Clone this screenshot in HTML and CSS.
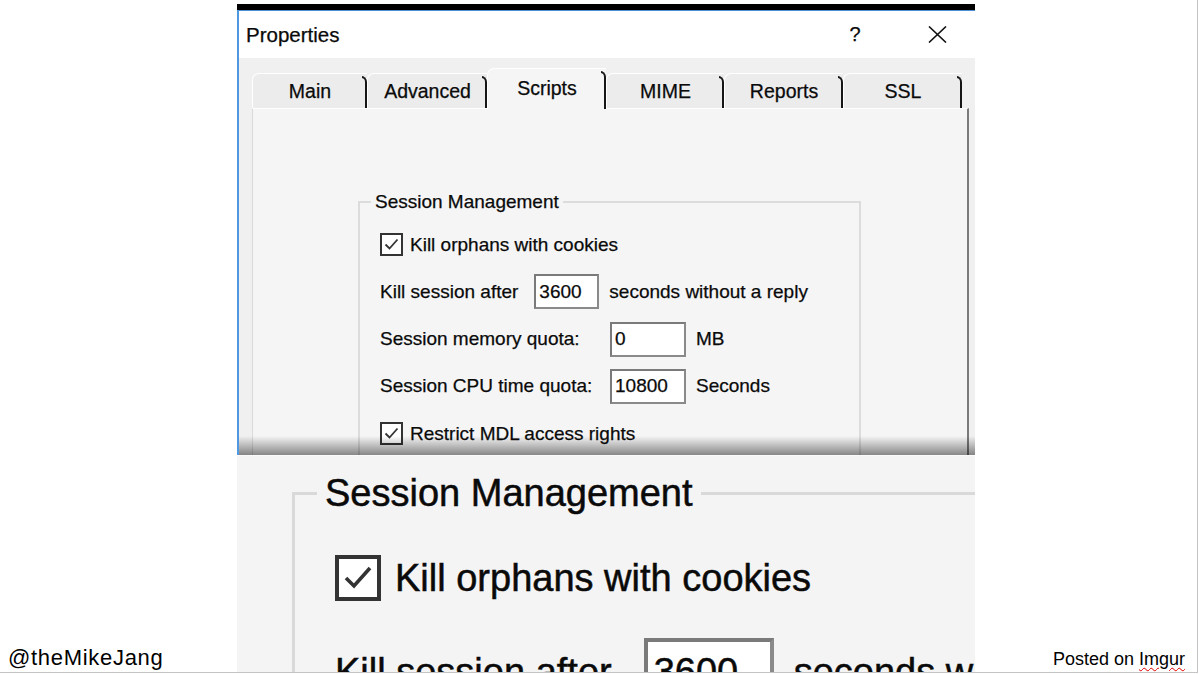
FILE: index.html
```html
<!DOCTYPE html>
<html lang="en">
<head>
<meta charset="utf-8">
<title>Properties - Session Management</title>
<link rel="stylesheet" href="styles.css">
</head>
<body>
<div class="slide">
  <div class="credit credit-left">@theMikeJang</div>

  <div class="shot">
    <div class="shot-bar"></div>
    <div class="window">
      <div class="titlebar">
        <span class="title">Properties</span>
        <span class="tb-btn">?</span>
        <span class="tb-btn tb-close">
          <svg width="19" height="17" viewBox="0 0 19 17"><path d="M1 0.5 L18 16.5 M18 0.5 L1 16.5" stroke="#111" stroke-width="1.6" fill="none"/></svg>
        </span>
      </div>
      <div class="tabs">
        <div class="tab tab-main">Main</div>
        <div class="tab tab-adv">Advanced</div>
        <div class="tab tab-active">Scripts</div>
        <div class="tab tab-mime">MIME</div>
        <div class="tab tab-rep">Reports</div>
        <div class="tab tab-ssl">SSL</div>
      </div>
      <div class="panel">
        <fieldset class="group">
          <legend>Session Management</legend>
          <div class="row">
            <span class="check"><svg width="19" height="19" viewBox="0 0 19 19"><path d="M3.5 9.5 L7.5 13.5 L15.5 4.5" stroke="#333" stroke-width="1.8" fill="none"/></svg></span>
            <span>Kill orphans with cookies</span>
          </div>
          <div class="row">
            <span class="lbl-auto">Kill session after</span>
            <span class="field field-sm">3600</span>
            <span class="unit">seconds without a reply</span>
          </div>
          <div class="row">
            <span class="lbl">Session memory quota:</span>
            <span class="field">0</span>
            <span class="unit">MB</span>
          </div>
          <div class="row">
            <span class="lbl">Session CPU time quota:</span>
            <span class="field">10800</span>
            <span class="unit">Seconds</span>
          </div>
          <div class="row">
            <span class="check"><svg width="19" height="19" viewBox="0 0 19 19"><path d="M3.5 9.5 L7.5 13.5 L15.5 4.5" stroke="#333" stroke-width="1.8" fill="none"/></svg></span>
            <span>Restrict MDL access rights</span>
          </div>
        </fieldset>
      </div>
    </div>

    <div class="magnify">
      <div class="magnify-inner">
        <fieldset class="group group-zoom">
          <legend>Session Management</legend>
          <div class="row">
            <span class="check"><svg width="19" height="19" viewBox="0 0 19 19"><path d="M3.5 9.5 L7.5 13.5 L15.5 4.5" stroke="#333" stroke-width="1.8" fill="none"/></svg></span>
            <span>Kill orphans with cookies</span>
          </div>
          <div class="row">
            <span class="lbl-auto">Kill session after</span>
            <span class="field field-sm">3600</span>
            <span class="unit">seconds without a reply</span>
          </div>
        </fieldset>
      </div>
    </div>
  </div>

  <div class="credit credit-right">Posted on <span class="squiggle">Imgur</span></div>
</div>
</body>
</html>
```

FILE: styles.css
```css
* { box-sizing: border-box; }

html, body {
  margin: 0;
  padding: 0;
  background: #fff;
}

.slide {
  width: 1198px;
  height: 673px;
  display: grid;
  grid-template-columns: 237px 738px 1fr;
  border-right: 1px solid #c4c4c4;
  border-bottom: 1px solid #c4c4c4;
  overflow: hidden;
  background: #fff;
  font-family: "Liberation Sans", Arial, sans-serif;
  color: #000;
}

/* credits */
.credit {
  align-self: end;
  padding-bottom: 2px;
}
.credit-left {
  font-size: 22px;
  line-height: 25px;
  letter-spacing: 0.7px;
  padding-left: 8px;
}
.credit-right {
  font-size: 18px;
  line-height: 21px;
  text-align: right;
  padding-right: 12px;
}
.squiggle {
  text-decoration: underline wavy #e00000;
  text-decoration-thickness: 1px;
  text-underline-offset: 2px;
}

/* screenshot column */
.shot {
  height: 672px;
  display: flex;
  flex-direction: column;
  overflow: hidden;
}
.shot-bar {
  margin-top: 4px;
  height: 6px;
  background: #000;
  flex: none;
}

.window {
  position: relative;
  flex: none;
  height: 445px;
  overflow: hidden;
  background: #f0f0f0;
  border-top: 1px solid #4a90d9;
  border-left: 2px solid #4f97e0;
  font-size: 19px;
  color: #0a0a0a;
  -webkit-text-stroke: 0.25px #0a0a0a;
}
.window::after {
  content: "";
  position: absolute;
  left: 0;
  right: 0;
  bottom: 0;
  height: 19px;
  background: linear-gradient(to bottom, rgba(0,0,0,0), rgba(0,0,0,0.45));
  pointer-events: none;
}

.titlebar {
  height: 47px;
  background: #fff;
  display: flex;
  align-items: center;
  padding-left: 7px;
  padding-right: 15px;
}
.title {
  flex: 1;
  font-size: 20.5px;
}
.tb-btn {
  width: 46px;
  display: flex;
  justify-content: center;
  align-items: center;
  font-size: 20px;
}
.tb-close {
  margin-left: 36px;
}

/* tabs */
.tabs {
  height: 50px;
  display: flex;
  align-items: flex-end;
  padding-left: 13px;
}
.tab {
  position: relative;
  height: 35px;
  display: flex;
  align-items: center;
  justify-content: center;
  background: #ececec;
  border-top: 1px solid #fff;
  border-left: 1px solid #fff;
  border-top-left-radius: 7px;
  font-size: 19.5px;
  padding-top: 1px;
}
.tab::after {
  content: "";
  position: absolute;
  right: 0;
  top: 2px;
  bottom: 0;
  width: 5px;
  border-right: 2px solid #161616;
  border-top: 2px solid #161616;
  border-top-right-radius: 6px;
  clip-path: inset(0 0 0 2px);
}
.tab-main { width: 115px; }
.tab-adv { width: 120px; }
.tab-active {
  width: 119px;
  height: 41px;
  margin-bottom: -1px;
  background: #f5f5f5;
  z-index: 1;
  padding-top: 0;
  padding-bottom: 2px;
}
.tab-mime { width: 118px; }
.tab-rep { width: 119px; }
.tab-ssl { width: 119px; }

/* panel */
.panel {
  height: 347px;
  overflow: hidden;
  margin-left: 13px;
  margin-right: 6px;
  background: #f5f5f5;
  border-top: 1px solid #fff;
  border-left: 1px solid #dadada;
  border-right: 2px solid #7a7a7a;
  padding-top: 82px;
  padding-left: 105px;
}

/* group box */
.group {
  margin: 0;
  width: 503px;
  border: 2px solid #dcdcdc;
  padding: 8px 0 40px 20px;
  min-inline-size: 0;
}
.group legend {
  margin-left: -9px;
  padding: 0 4px;
  line-height: 22px;
}

.row {
  display: flex;
  align-items: center;
  height: 47.25px;
  white-space: nowrap;
}
.check {
  width: 23px;
  height: 23px;
  border: 2px solid #333;
  background: #fff;
  margin-right: 7px;
  display: flex;
  align-items: center;
  justify-content: center;
  flex: none;
}
.lbl-auto {
  margin-right: 16px;
}
.lbl {
  width: 230px;
  flex: none;
}
.field {
  width: 76px;
  height: 35px;
  flex: none;
  background: #fff;
  border: 2px solid #8a8a8a;
  border-top-color: #7a7a7a;
  border-left-color: #7a7a7a;
  padding: 0 3px;
  display: flex;
  align-items: center;
}
.field-sm {
  width: 65px;
}
.unit {
  margin-left: 10px;
}

/* magnified part */
.magnify {
  flex: 1;
  overflow: hidden;
  background: #f4f4f4;
  border-top: 1px solid #fafafa;
  font-size: 19px;
  color: #0a0a0a;
  -webkit-text-stroke: 0.25px #0a0a0a;
}
.magnify-inner {
  zoom: 2;
  padding: 7.5px 0 0 27.5px;
}
.group-zoom {
  border-color: #d9d9d9;
  border-width: 1.5px;
}
```
